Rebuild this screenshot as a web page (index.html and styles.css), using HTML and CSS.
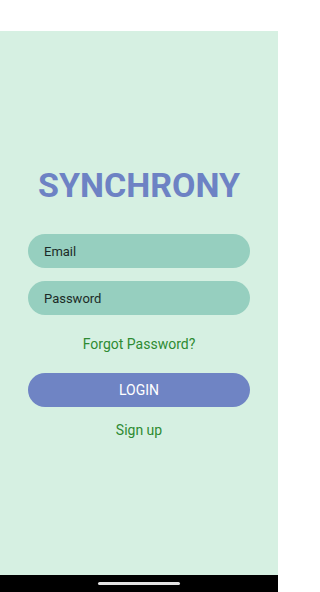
FILE: index.html
```html
<!DOCTYPE html>
<html lang="en">
<head>
<meta charset="utf-8">
<title>Synchrony</title>
<link rel="stylesheet" href="styles.css">
</head>
<body>
<div class="status"></div>
<main class="screen">
  <h1 class="title">SYNCHRONY</h1>
  <form class="form">
    <input class="field" type="email" placeholder="Email">
    <input class="field field-pass" type="password" placeholder="Password">
    <a class="link forgot" href="#">Forgot Password?</a>
    <button class="login" type="button">LOGIN</button>
    <a class="link signup" href="#">Sign up</a>
  </form>
</main>
<div class="navbar"><span class="home"></span></div>
</body>
</html>
```
FILE: styles.css
```css
html, body {
  margin: 0;
  padding: 0;
  width: 278px;
  height: 592px;
  overflow: hidden;
  font-family: Roboto, "Liberation Sans", sans-serif;
  background: #ffffff;
}
.status {
  height: 31px;
  background: #ffffff;
}
.screen {
  height: 544px;
  background: #d6f0e2;
  display: flex;
  flex-direction: column;
  align-items: stretch;
  padding: 0 28px;
  box-sizing: border-box;
}
.title {
  margin: 134px 0 0;
  font-size: 34px;
  line-height: 40px;
  font-weight: 700;
  color: #6d82c4;
  text-align: center;
  letter-spacing: 0;
}
.form {
  display: flex;
  flex-direction: column;
  align-items: center;
  margin: 29px 0 0;
}
.field {
  box-sizing: border-box;
  width: 100%;
  height: 34px;
  border: none;
  border-radius: 17px;
  background: #96cfbf;
  padding: 0 16px;
  font-family: inherit;
  font-size: 13px;
  color: #1c2b27;
  outline: none;
  margin: 0;
}
.field::placeholder {
  color: #1c2b27;
  opacity: 1;
}
.field-pass {
  margin-top: 13px;
}
.link {
  color: #2e8b32;
  text-decoration: none;
  font-size: 14px;
  line-height: 16px;
}
.forgot {
  margin-top: 21px;
}
.login {
  box-sizing: border-box;
  width: 100%;
  height: 34px;
  margin-top: 21px;
  border: none;
  border-radius: 17px;
  background: #6f84c4;
  color: #ffffff;
  font-family: inherit;
  font-size: 14px;
  padding: 0;
}
.signup {
  margin-top: 15px;
}
.navbar {
  height: 17px;
  background: #000000;
  display: flex;
  justify-content: center;
  align-items: flex-start;
  padding-top: 7px;
  box-sizing: border-box;
}
.home {
  width: 82px;
  height: 3px;
  border-radius: 2px;
  background: #e2e2e2;
}
```
